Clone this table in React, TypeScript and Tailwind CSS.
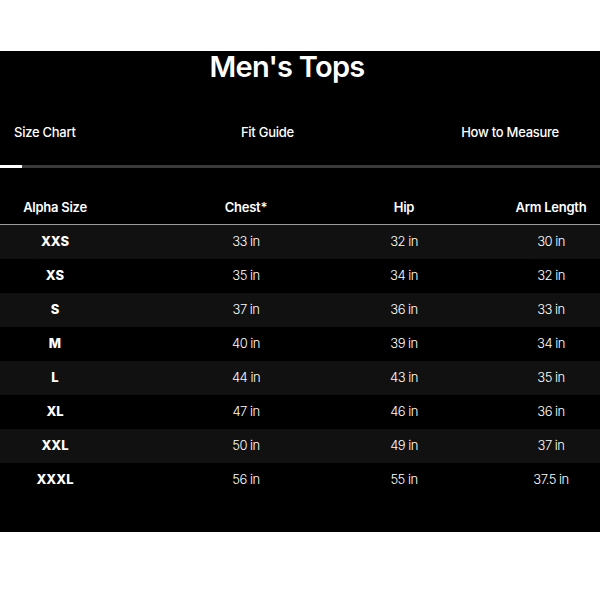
const rows = [
  ["XXS", "33 in", "32 in", "30 in"],
  ["XS", "35 in", "34 in", "32 in"],
  ["S", "37 in", "36 in", "33 in"],
  ["M", "40 in", "39 in", "34 in"],
  ["L", "44 in", "43 in", "35 in"],
  ["XL", "47 in", "46 in", "36 in"],
  ["XXL", "50 in", "49 in", "37 in"],
  ["XXXL", "56 in", "55 in", "37.5 in"],
];

export default function App() {
  return (
    <div className="w-[600px] h-[600px] bg-white font-['Inter',sans-serif] text-white">
      <div className="h-[51px]" />
      <div className="bg-black h-[481px] flex flex-col">
        {/* Title */}
        <h1 className="text-center text-[29px] leading-[30px] font-semibold tracking-[-0.025em] pt-[1px] mr-[26px]">
          Men's Tops
        </h1>

        {/* Tabs */}
        <div className="flex items-center justify-between mt-[41px] pl-[14px] pr-[41px] text-[13px] font-medium tracking-[-0.02em]">
          <span>Size Chart</span>
          <span className="mr-[2px]">Fit Guide</span>
          <span>How to Measure</span>
        </div>
        <div className="flex h-[3px] mt-[22px]">
          <div className="w-[22px] bg-white" />
          <div className="flex-1 bg-[#3a3a3a]" />
        </div>

        {/* Table header */}
        <div className="grid grid-cols-[110px_272px_44px_1fr] items-center h-[57px] pt-[25px] border-b border-[#9a9a9a] text-[13px] font-semibold tracking-[-0.02em]">
          <span className="text-center">Alpha Size</span>
          <span className="text-center">Chest*</span>
          <span className="text-center">Hip</span>
          <span className="text-center pl-[76px]">Arm Length</span>
        </div>

        {/* Rows */}
        {rows.map((r, i) => (
          <div
            key={r[0]}
            className={`grid grid-cols-[110px_272px_44px_1fr] items-center h-[34px] text-[13px] tracking-[-0.04em] ${
              i % 2 === 0 ? "bg-[#111111]" : "bg-black"
            }`}
          >
            <span className="text-center font-extrabold tracking-normal">{r[0]}</span>
            <span className="text-center font-light">{r[1]}</span>
            <span className="text-center font-light">{r[2]}</span>
            <span className="text-center font-light pl-[76px]">{r[3]}</span>
          </div>
        ))}
      </div>
    </div>
  );
}
